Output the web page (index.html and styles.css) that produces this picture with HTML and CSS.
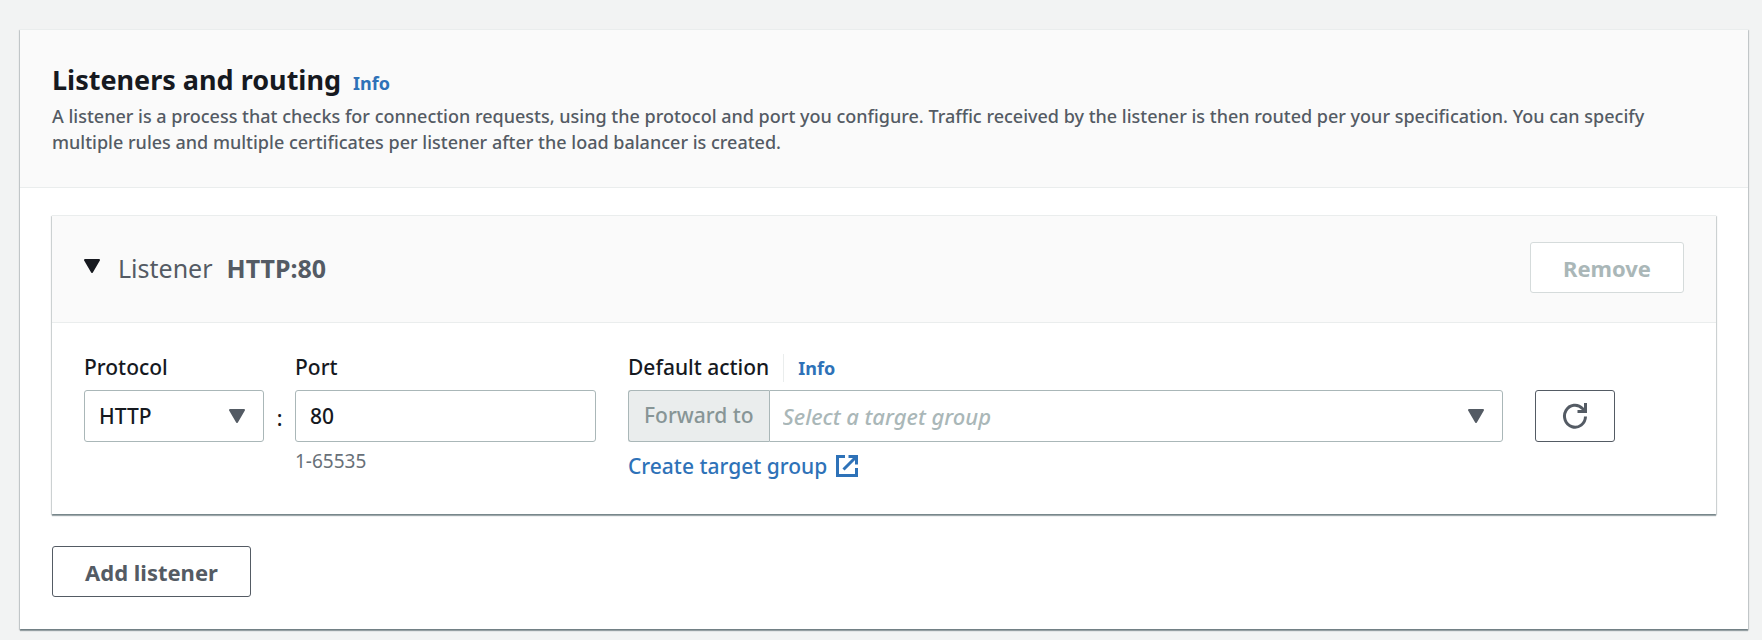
FILE: index.html
```
<!DOCTYPE html>
<html lang="en">
<head>
<meta charset="utf-8">
<title>Listeners and routing</title>
<link rel="stylesheet" href="styles.css">
</head>
<body>
<main class="panel">
  <header class="panel-header">
    <div class="title-row">
      <h2 class="title">Listeners and routing</h2>
      <a class="info" href="#">Info</a>
    </div>
    <p class="description">A listener is a process that checks for connection requests, using the protocol and port you configure. Traffic received by the listener is then routed per your specification. You can specify multiple rules and multiple certificates per listener after the load balancer is created.</p>
  </header>
  <div class="panel-body">
    <section class="card">
      <header class="card-header">
        <button class="toggle" type="button" aria-expanded="true">
          <svg class="toggle-icon" viewBox="0 0 16 14" aria-hidden="true"><path d="M1 1h14L8 13z"/></svg>
          <span>Listener</span>
          <strong>HTTP:80</strong>
        </button>
        <button class="button" type="button" disabled>Remove</button>
      </header>
      <div class="card-body">
        <div class="field">
          <label class="label" for="protocol">Protocol</label>
          <div class="select">
            <select class="control" id="protocol"><option>HTTP</option></select>
            <svg class="caret" viewBox="0 0 16 14" aria-hidden="true"><path d="M1 1h14L8 13z"/></svg>
          </div>
        </div>
        <span class="colon">:</span>
        <div class="field">
          <label class="label" for="port">Port</label>
          <input class="control" id="port" type="text" inputmode="numeric" value="80" aria-describedby="port-hint">
          <span class="hint" id="port-hint">1-65535</span>
        </div>
        <div class="field action">
          <div class="label-row">
            <label class="label" for="target">Default action</label>
            <a class="info divided" href="#">Info</a>
          </div>
          <div class="group">
            <span class="prefix">Forward to</span>
            <div class="select">
              <select class="control placeholder" id="target"><option>Select a target group</option></select>
              <svg class="caret" viewBox="0 0 16 14" aria-hidden="true"><path d="M1 1h14L8 13z"/></svg>
            </div>
          </div>
          <a class="link" href="#">Create target group
            <svg class="external" viewBox="0 0 24 24" aria-hidden="true"><path d="M10 2.500H2.500v19h19V14M13.500 2.500h8v8M21 3L8.500 15.500"/></svg>
          </a>
        </div>
        <button class="button refresh" type="button" aria-label="Refresh target groups">
          <svg class="refresh-icon" viewBox="0 0 26 26" aria-hidden="true"><path d="M23.500 13.500A10.500 11 0 1 1 20.500 5.500L23 8M23.500 0v8.500H15.500"/></svg>
        </button>
      </div>
    </section>
    <button class="button" type="button">Add listener</button>
  </div>
</main>
</body>
</html>
```
FILE: styles.css
```
* {
  box-sizing: border-box;
}

body {
  margin: 0;
  padding: 29px 14px 11px 20px;
  background: #f2f3f3;
  color: #16191f;
  font-family: "Noto Sans", "Open Sans", sans-serif;
  font-size: 21px;
  font-weight: 500;
  line-height: 28px;
}

button,
input,
select {
  font: inherit;
}

.panel,
.card {
  background: #fff;
  border-top: 1px solid #eaeded;
  box-shadow: 0 2px 1px rgba(0, 28, 36, 0.35), 1px 1px 1px rgba(0, 28, 36, 0.15), -1px 1px 1px rgba(0, 28, 36, 0.15);
}

.panel-header,
.card-header {
  background: #fafafa;
  border-bottom: 1px solid #eaeded;
}

.panel-header {
  padding: 32px;
}

.title-row {
  display: flex;
  align-items: baseline;
  gap: 12px;
  margin-bottom: 5px;
}

.title {
  margin: 0;
  font-size: 27px;
  line-height: 36px;
}

.info {
  color: #2e72b8;
  font-size: 18px;
  font-weight: 700;
  text-decoration: none;
}

.description {
  margin: 0;
  padding-right: 32px;
  color: #545b64;
  font-size: 18px;
  line-height: 26px;
}

.panel-body {
  padding: 27px 32px 32px;
}

.card {
  margin-bottom: 32px;
}

.card-header {
  display: flex;
  align-items: center;
  justify-content: space-between;
  padding: 26px 32px 29px;
}

.toggle {
  display: flex;
  align-items: center;
  gap: 14px;
  padding: 0;
  border: 0;
  background: none;
  color: #545b64;
  font-size: 25px;
  font-weight: 400;
  line-height: 34px;
}

.toggle-icon,
.caret {
  width: 16px;
  height: 14px;
  stroke-width: 2px;
  stroke-linejoin: round;
}

.toggle-icon {
  margin: 0 4px 4px 0;
  fill: #16191f;
  stroke: #16191f;
}

.button {
  height: 51px;
  padding: 0 32px;
  border: 1px solid #545b64;
  border-radius: 3px;
  background: #fff;
  color: #545b64;
  font-size: 22px;
  font-weight: 700;
}

.button:disabled {
  border-color: #d5dbdb;
  color: #aab7b8;
}

.card-body {
  display: grid;
  grid-template-columns: 180px 31px minmax(0, 301fr) minmax(0, 939fr) 80px;
  padding: 30px 101px 34px 32px;
}

.field {
  display: flex;
  flex-direction: column;
  align-items: flex-start;
}

.action {
  padding: 0 32px;
}

.label {
  margin-bottom: 9px;
}

.label-row {
  display: flex;
  align-items: baseline;
}

.divided {
  margin-left: 14px;
  padding-left: 14px;
  border-left: 1px solid #eaeded;
}

.select {
  position: relative;
  display: flex;
  flex: 1;
  width: 100%;
}

.control {
  width: 100%;
  height: 52px;
  padding: 0 14px;
  border: 1px solid #aab7b8;
  border-radius: 3px;
  background: #fff;
  color: #16191f;
  appearance: none;
}

.caret {
  position: absolute;
  top: 19px;
  right: 19px;
  fill: #545b64;
  stroke: #545b64;
  pointer-events: none;
}

.colon,
.refresh {
  margin-top: 37px;
}

.colon {
  line-height: 56px;
  text-align: center;
}

.hint {
  margin-top: 6px;
  color: #687078;
  font-size: 19px;
  font-weight: 400;
  line-height: 26px;
}

.group {
  display: flex;
  width: 100%;
}

.prefix {
  padding: 0 15px;
  border: 1px solid #aab7b8;
  border-right: 0;
  border-radius: 3px 0 0 3px;
  background: #eaeded;
  color: #879596;
  line-height: 48px;
}

.placeholder {
  padding: 0 13px;
  border-radius: 0 3px 3px 0;
  color: #aab7b8;
  font-size: 22px;
  font-style: italic;
}

.link {
  display: flex;
  align-items: center;
  gap: 8px;
  margin-top: 10px;
  color: #2e72b8;
  text-decoration: none;
}

.external {
  width: 24px;
  height: 24px;
  fill: none;
  stroke: #2e72b8;
  stroke-width: 3px;
}

.refresh {
  display: grid;
  place-items: center;
  height: 52px;
  padding: 0;
}

.refresh-icon {
  width: 26px;
  height: 26px;
  fill: none;
  stroke: #545b64;
  stroke-width: 3px;
}
```
